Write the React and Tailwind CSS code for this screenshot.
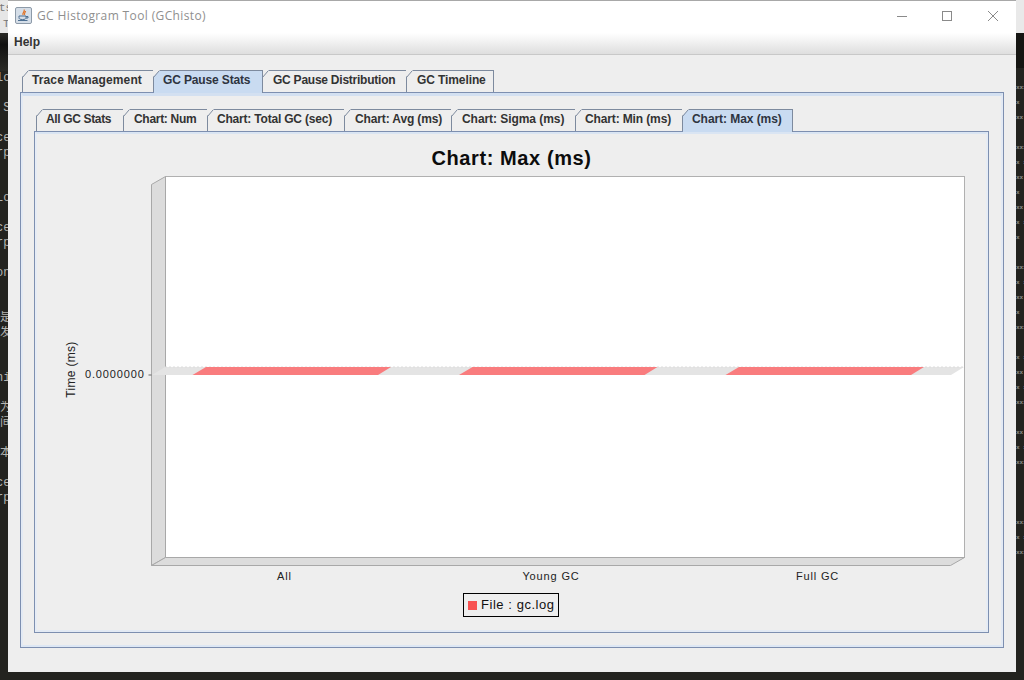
import React from "react";

const sans = "font-['Liberation_Sans',Arial,sans-serif]";

function Tab({ label, w, active, first, track }) {
  return (
    <div
      className={`relative flex h-[22px] shrink-0 items-center whitespace-nowrap border-t border-r border-[#7d8a9e] pb-[4px] text-[12px] font-bold ${w} ${track} ${
        active ? "z-10 h-[23px] -mb-px pb-[5px] bg-[#c9dbf1] text-[#2e3440]" : "bg-[#eeeeee] text-[#333333]"
      } ${first ? "border-l" : ""}`}
    >
      <svg className="absolute -left-px -top-px" width="8" height="8" viewBox="0 0 8 8">
        <path d="M0 0H7L0 7Z" fill="#eeeeee" />
        <path d="M0.5 7.5L6 1" stroke="#7d8a9e" strokeWidth="1" fill="none" />
      </svg>
      <span>{label}</span>
    </div>
  );
}

const outerTabs = [
  { label: "Trace Management", w: "w-[132px] pl-[9px]", track: "tracking-[0.12px]", first: true },
  { label: "GC Pause Stats", w: "w-[109px] pl-[9px]", track: "tracking-[-0.14px]", active: true },
  { label: "GC Pause Distribution", w: "w-[144px] pl-[10px]", track: "tracking-[-0.24px]" },
  { label: "GC Timeline", w: "w-[87px] pl-[10px]", track: "tracking-[-0.1px]" },
];

const innerTabs = [
  { label: "All GC Stats", w: "w-[88px] pl-[9px]", track: "tracking-[-0.35px]", first: true },
  { label: "Chart: Num", w: "w-[84px] pl-[10px]", track: "tracking-[-0.3px]" },
  { label: "Chart: Total GC (sec)", w: "w-[137px] pl-[9px]", track: "tracking-[-0.2px]" },
  { label: "Chart: Avg (ms)", w: "w-[107px] pl-[10px]", track: "tracking-[-0.13px]" },
  { label: "Chart: Sigma (ms)", w: "w-[124px] pl-[10px]", track: "tracking-[-0.06px]" },
  { label: "Chart: Min (ms)", w: "w-[107px] pl-[9px]", track: "tracking-[-0.13px]" },
  { label: "Chart: Max (ms)", w: "w-[110px] pl-[9px]", track: "tracking-[-0.06px]", active: true },
];

const leftRows = ["lo", "", " S", "", "ce", "rp", "", "", "Lo", "", "ce", "rp", "", "on", "", "", "是", "发", "", "", "ni", "", "为", "间", "", "本", "", "ce", "rp"];

const rightRows = ["xxx xx", "x", "xx x", "", "xxxx", "x x", "xx xx", "x", "xx x", "x xx", "x", "", "xxx", "x x", "xx x", "x", "xxxx", "", "x xx", "xx", "x x", "xxxx", "", "xx x", "x x", "xxxx", "", "", "", "xxxx", "x x", "xxx x"];

function Chart() {
  const bars = [192.5, 459, 725.5];
  return (
    <svg className="block" width="949" height="413" viewBox="37 172 949 413">
      <rect x="165.5" y="176.5" width="799" height="381" fill="#ffffff" stroke="#b0b0b0" />
      <path d="M151.5 184.5L165.5 176.5V557.5L151.5 565.5Z" fill="#dcdcdc" stroke="#a8a8a8" />
      <path d="M151.5 565.5L165.5 557.5H964.5L950.5 565.5Z" fill="#dcdcdc" stroke="#a8a8a8" />
      <path d="M152 375L165 367H964L951 375Z" fill="#e4e4e4" />
      <path d="M165 367H964" stroke="#dcdcdc" strokeDasharray="2 2" />
      {bars.map((x) => (
        <path key={x} d={`M${x} 375L${x + 13.5} 367H${x + 198.5}L${x + 185.5} 375Z`} fill="#f97c7e" />
      ))}
      <path d="M148.5 375H151.5" stroke="#666666" />
      <g fontFamily="'Liberation Sans', Arial, sans-serif" fontSize="11" fill="#222222" letterSpacing="0.85">
        <text x="85" y="378">0.0000000</text>
        <text x="284.5" y="580" textAnchor="middle">All</text>
        <text x="551" y="580" textAnchor="middle">Young GC</text>
        <text x="817.5" y="580" textAnchor="middle">Full GC</text>
      </g>
      <text
        transform="translate(75 369.5) rotate(-90)"
        textAnchor="middle"
        fontFamily="'Liberation Sans', Arial, sans-serif"
        fontSize="12"
        letterSpacing="0.3"
        fill="#222222"
      >
        Time (ms)
      </text>
    </svg>
  );
}

function JavaIcon() {
  return (
    <svg width="17" height="17" viewBox="0 0 17 17" className="shrink-0">
      <rect x="0.5" y="0.5" width="16" height="16" rx="1.5" fill="#d5dee8" stroke="#8d9aa8" />
      <path d="M9 2.5C10.5 4.5 7 5.5 8 8M10.5 4C10.5 5.5 9 6 9.5 8" stroke="#e0742a" strokeWidth="1.2" fill="none" />
      <path d="M4 9H11V10.5C11 12 10 12.5 7.5 12.5C5 12.5 4 12 4 10.5Z" fill="none" stroke="#4d6f92" strokeWidth="1" />
      <path d="M11 9.5H13V11H11M3 13.5H12.5" stroke="#4d6f92" strokeWidth="1" fill="none" />
    </svg>
  );
}

export default function App() {
  return (
    <div className={`flex h-[680px] w-[1024px] overflow-hidden bg-[#23231f] ${sans}`}>
      {/* Desktop behind the window, left edge */}
      <div className="flex w-2 shrink-0 flex-col overflow-hidden">
        <div className="h-[33px] shrink-0 overflow-hidden bg-[#e6e6e6] font-['Liberation_Mono',monospace] text-[11px] leading-[16px] text-[#777777]">
          <div className="-ml-[1px]">ts</div>
          <div className="ml-[3px]">T</div>
        </div>
        <div className="h-[38px] shrink-0 bg-[linear-gradient(#2a2a26,#111110_30%,#2a2a26)]" />
        <div className="flex flex-col font-['Liberation_Mono','Noto_Sans_CJK_SC',monospace] text-[12px] leading-[15px] text-[#b4b4b0]">
          {leftRows.map((t, i) => (
            <div key={i} className="flex h-[15px] w-2 justify-start overflow-hidden whitespace-pre">
              <span className={/[\u4e00-\u9fff]/.test(t) ? "" : "-ml-[4px]"}>{t}</span>
            </div>
          ))}
        </div>
      </div>

      {/* Application window */}
      <div className="flex h-[672px] w-[1008px] shrink-0 flex-col border-t border-[#a8a8a8] bg-[#eeeeee]">
        <div className="flex h-[32px] shrink-0 items-center bg-white pb-[3px] pl-[7px]">
          <JavaIcon />
          <span className="ml-[5px] font-['Open_Sans',sans-serif] text-[12px] tracking-[0.37px] text-[#8f8f8f]">
            GC Histogram Tool (GChisto)
          </span>
          <div className="ml-auto flex items-center">
            <svg width="118" height="12" viewBox="0 0 118 12" className="mr-[1px]">
              <path d="M0 6.5H10" stroke="#8a8a8a" />
              <rect x="45.5" y="1.5" width="9" height="9" fill="none" stroke="#8a8a8a" />
              <path d="M91 1L101 11M101 1L91 11" stroke="#8a8a8a" />
            </svg>
          </div>
        </div>
        <div className="flex h-[22px] shrink-0 items-center border-b border-[#c8c8c8] bg-[linear-gradient(#ffffff,#dedede)] pb-[4px] pl-[6px] text-[12px] font-bold text-[#333333]">
          Help
        </div>

        <div className="flex min-h-0 flex-1 flex-col pl-[12px] pr-[12px] pt-[15px] pb-[24px]">
          <div className="flex pl-[2px]">
            {outerTabs.map((t) => (
              <Tab key={t.label} {...t} />
            ))}
          </div>
          <div className="flex min-h-0 flex-1 flex-col border border-[#7d8fb0]">
            <div className="flex min-h-0 flex-1 flex-col border-x-2 border-b-2 border-t-[3px] border-x-[#e3eaf4] border-b-[#dde7f4] border-t-[#d3e0f1] pl-[11px] pr-[12px] pb-[12px] pt-[13px]">
              <div className="flex pl-[2px]">
                {innerTabs.map((t) => (
                  <Tab key={t.label} {...t} />
                ))}
              </div>
              <div className="flex min-h-0 flex-1 flex-col border border-[#7d8fb0]">
                <div className="flex min-h-0 flex-1 flex-col items-center border-2 border-x-[#e6ecf5] border-b-[#e3eaf4] border-t-[#dae5f3]">
                  <div className="mb-[3px] mt-[13px] h-[22px] text-[20px] font-bold leading-[22px] tracking-[0.6px] text-[#0c0c0c]">Chart: Max (ms)</div>
                  <Chart />
                  <div className="-ml-[1px] mt-[8px] flex h-[24px] w-[96px] items-center border border-black pl-[4px] text-[13px] tracking-[0.55px] text-[#111111]">
                    <span className="mr-[4px] h-[9px] w-[9px] shrink-0 bg-[#f85252]" />
                    <span className="whitespace-nowrap">File : gc.log</span>
                  </div>
                </div>
              </div>
            </div>
          </div>
        </div>
      </div>

      {/* Desktop behind the window, right edge */}
      <div className="flex min-w-0 flex-1 flex-col overflow-hidden">
        <div className="h-[33px] shrink-0 bg-[#e9e9e9]" />
        <div className="h-[35px] shrink-0 bg-[#151512]" />
        <div className="flex flex-col pt-[12px] font-['Liberation_Mono',monospace] text-[6px] font-bold leading-[15px] text-[#8f8f8b]">
          {rightRows.map((t, i) => (
            <div key={i} className="h-[15px] overflow-hidden whitespace-nowrap">{t}</div>
          ))}
        </div>
      </div>
    </div>
  );
}
